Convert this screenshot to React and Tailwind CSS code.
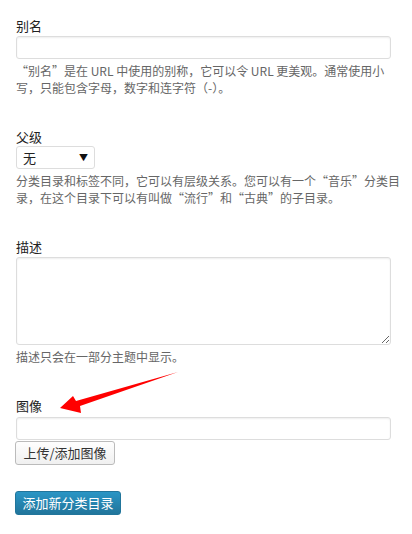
import React from "react";

const font = {
  fontFamily: '"Noto Sans CJK SC", "Liberation Sans", sans-serif',
};

const Label = ({ children, className = "" }) => (
  <label className={`block text-[13px] leading-[17px] text-[#222] ${className}`}>
    {children}
  </label>
);

const Hint = ({ children }) => (
  <p className="w-[384px] text-[12px] leading-[17px] text-[#666] mt-[3px]">{children}</p>
);

const Arrow = () => (
  <svg
    className="absolute left-[56px] top-[368px]"
    width="126"
    height="48"
    viewBox="56 368 126 48"
  >
    <polygon
      points="60,408 73,396 76,401 178,372 80,406 81,413"
      fill="#ff0000"
    />
  </svg>
);

export default function App() {
  return (
    <div className="relative bg-white w-[412px] h-[534px] pl-4 pt-[17px]" style={font}>
      <Label>别名</Label>
      <input
        type="text"
        className="mt-[2px] block w-[375px] h-[23px] border border-[#dddddd] rounded-[3px] shadow-[inset_0_1px_2px_rgba(0,0,0,0.07)] bg-white"
      />
      <Hint>
        “别名”是在 URL 中使用的别称，它可以令 URL 更美观。通常使用小写，只能包含字母，数字和连字符（-）。
      </Hint>

      <Label className="mt-[32px]">父级</Label>
      <div className="mt-px flex items-center justify-between w-[79px] h-[23px] border border-[#dddddd] rounded-[3px] bg-white pl-[6px] pr-[6px]">
        <span className="text-[13px] text-[#222]">无</span>
        <span className="text-[9px] text-[#111]">▼</span>
      </div>
      <Hint>
        分类目录和标签不同，它可以有层级关系。您可以有一个“音乐”分类目录，在这个目录下可以有叫做“流行”和“古典”的子目录。
      </Hint>

      <Label className="mt-[32px]">描述</Label>
      <textarea className="mt-[2px] block w-[375px] h-[88px] border border-[#dddddd] rounded-[3px] shadow-[inset_0_1px_2px_rgba(0,0,0,0.07)] bg-white" />
      <Hint>描述只会在一部分主题中显示。</Hint>

      <Label className="mt-[32px]">图像</Label>
      <input
        type="text"
        className="mt-[3px] block w-[375px] h-[23px] border border-[#dddddd] rounded-[3px] shadow-[inset_0_1px_2px_rgba(0,0,0,0.07)] bg-white"
      />
      <button className="-ml-px mt-px block w-[100px] h-[24px] border border-[#bbbbbb] rounded-[3px] bg-gradient-to-b from-[#fefefe] to-[#f0f0f0] text-[13px] text-[#333]">
        上传/添加图像
      </button>

      <button className="-ml-px mt-[26px] block w-[106px] h-[24px] border border-[#21759b] rounded-[3px] bg-gradient-to-b from-[#2a95c5] to-[#21759b] text-[13px] text-white">
        添加新分类目录
      </button>

      <Arrow />
    </div>
  );
}
